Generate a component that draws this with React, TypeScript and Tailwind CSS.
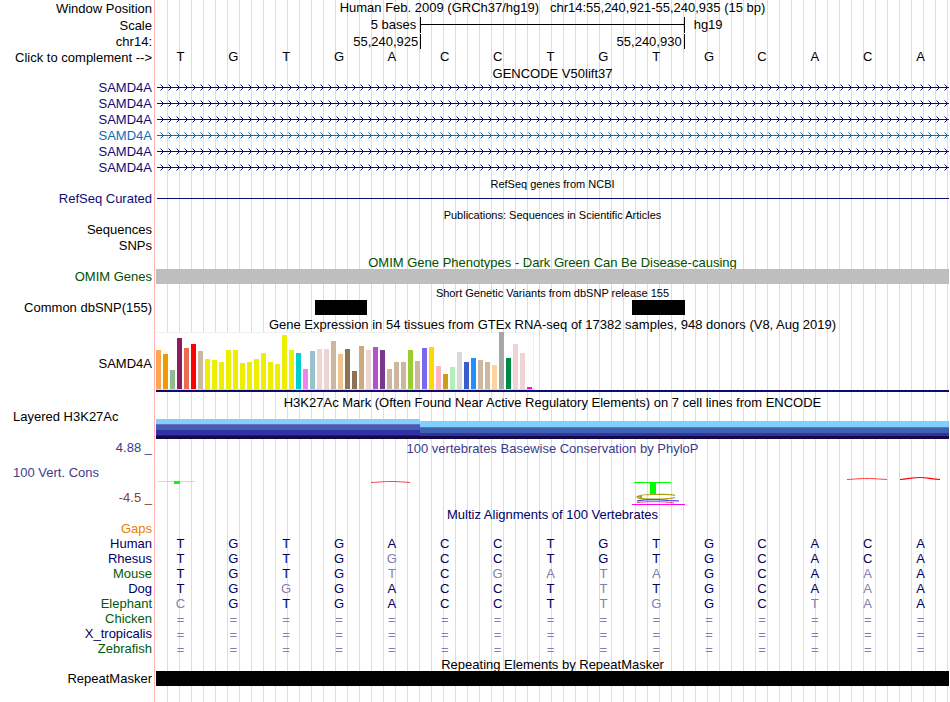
import type { ReactNode } from 'react'
import clsx from 'clsx'

const REFERENCE = 'TGTGACCTGTGCACA'

const TRANSCRIPTS = [
  { id: 'tx1', color: 'text-[#0c0c78]' },
  { id: 'tx2', color: 'text-[#0c0c78]' },
  { id: 'tx3', color: 'text-[#0c0c78]' },
  { id: 'tx4', color: 'text-[#0a6eb4]' },
  { id: 'tx5', color: 'text-[#0c0c78]' },
  { id: 'tx6', color: 'text-[#0c0c78]' },
]

const ALIGNMENTS = [
  { species: 'Human', bases: 'TGTGACCTGTGCACA', color: 'text-[#000064]' },
  { species: 'Rhesus', bases: 'TGTGGCCTGTGCACA', color: 'text-[#000064]' },
  { species: 'Mouse', bases: 'TGTGTCGATAGCAAA', color: 'text-[#005a0a]' },
  { species: 'Dog', bases: 'TGGGACCTTTGCAAA', color: 'text-[#000064]' },
  { species: 'Elephant', bases: 'CGTGACCTTGGCTAA', color: 'text-[#005a0a]' },
  { species: 'Chicken', bases: '===============', color: 'text-[#005a0a]' },
  { species: 'X_tropicalis', bases: '===============', color: 'text-[#000064]' },
  { species: 'Zebrafish', bases: '===============', color: 'text-[#005a0a]' },
]

// [bar height, tissue colour]
const EXPRESSION: [number, string][] = [
  [39, '#ffa54f'], [35, '#ee9a00'], [19, '#8fbc8f'], [51, '#8b1c62'], [41, '#ee6a50'], [45, '#ff0000'],
  [38, '#cdb79e'], [30, '#eeee00'], [29, '#eeee00'], [27, '#eeee00'], [39, '#eeee00'], [39, '#eeee00'],
  [26, '#eeee00'], [27, '#eeee00'], [30, '#eeee00'], [36, '#eeee00'], [27, '#eeee00'], [25, '#eeee00'],
  [54, '#eeee00'], [39, '#eeee00'], [36, '#00cdcd'], [20, '#ee82ee'], [38, '#9ac0cd'], [40, '#eed5d2'],
  [40, '#eed5d2'], [48, '#cdb79e'], [35, '#eec591'], [40, '#8b7355'], [18, '#8b7355'], [43, '#cdaa7d'],
  [39, '#eed5d2'], [42, '#b452cd'], [39, '#7a378b'], [20, '#cdb79e'], [27, '#cdb79e'], [27, '#cdb79e'],
  [39, '#9acd32'], [28, '#cdb79e'], [41, '#7a67ee'], [42, '#ffd700'], [23, '#ffb6c1'], [15, '#cd9b1d'],
  [22, '#b4eeb4'], [37, '#d9d9d9'], [27, '#3a5fcd'], [31, '#1e90ff'], [29, '#cdb79e'], [27, '#cdb79e'],
  [24, '#ffd39b'], [57, '#a6a6a6'], [31, '#008b45'], [45, '#eed5d2'], [36, '#eed5d2'], [2, '#ff00ff'],
]

interface RowProps {
  label?: ReactNode
  labelClass?: string
  className?: string
  children?: ReactNode
}

function Row({ label, labelClass, className, children }: RowProps) {
  return (
    <div className={clsx('flex pr-px', className)}>
      <div className={clsx('flex w-[156px] shrink-0 justify-end pr-1', labelClass)}>{label}</div>
      <div className="min-w-0 flex-1">{children}</div>
    </div>
  )
}

function Title({ label, labelClass, className, children }: RowProps) {
  return (
    <Row label={label} labelClass={labelClass}>
      <h2 className={clsx('flex items-start justify-center whitespace-pre', className)}>{children}</h2>
    </Row>
  )
}

function Bases({ bases, align = false }: { bases: string; align?: boolean }) {
  return (
    <div className="grid grid-cols-15 text-center">
      {bases.split('').map((base, i) => (
        <span
          key={i}
          className={clsx(
            'h-[15px] pr-1',
            base === '=' && 'leading-[17px]',
            align && (base === REFERENCE[i] ? 'text-[#000064]' : 'text-[#8080b2]'),
          )}
        >
          {base}
        </span>
      ))}
    </div>
  )
}

function Intron({ id }: { id: string }) {
  return (
    <svg className="block h-4 w-full" shapeRendering="crispEdges">
      <defs>
        <pattern id={id} width="8" height="16" patternUnits="userSpaceOnUse">
          <path d="M5 5h1v1h1v3h-1v1h-1v-1h1v-3h-1z" fill="currentColor" />
          <path d="M4 4h1v1h-1zM4 10h1v1h-1z" fill="currentColor" opacity="0.5" />
        </pattern>
      </defs>
      <rect x="1" y="7" width="100%" height="1" fill="currentColor" />
      <rect width="100%" height="16" fill={`url(#${id})`} />
    </svg>
  )
}

function Expression() {
  return (
    <div className="border-b-2 border-[#0c0c78]">
      <div className="flex h-[58px] w-[378px] items-end gap-[2px] border-t border-r border-b border-t-[#f0f0f0] border-r-[#f0f0f0] border-b-[#d8d8d8] bg-white">
        {EXPRESSION.map(([height, color], i) => (
          <div key={i} className="w-[5px] shrink-0" style={{ height, backgroundColor: color }} />
        ))}
      </div>
    </div>
  )
}

function Acetylation() {
  return (
    <div className="flex items-end pt-[10px]">
      <div className="w-1/3">
        <div className="h-[5px] bg-[#80d0ff]" />
        <div className="h-px bg-[#6e6ec8]" />
        <div className="h-[5px] bg-[#4062ae]" />
        <div className="h-[5px] bg-[#332fa6]" />
        <div className="h-px bg-[#2a1c58]" />
        <div className="h-[3px] bg-[#150a48]" />
      </div>
      <div className="w-2/3">
        <div className="h-[6px] bg-[#80d0ff]" />
        <div className="h-px bg-[#6e6ec8]" />
        <div className="h-[5px] bg-[#4062ae]" />
        <div className="h-[3px] bg-[#332fa6]" />
        <div className="h-[3px] bg-[#150a48]" />
      </div>
    </div>
  )
}

function Conservation() {
  return (
    <svg className="block h-[51px] w-full" viewBox="0 0 793 51" preserveAspectRatio="none" fill="none">
      <path d="M2 25.5H39" stroke="#a8f5a8" />
      <path d="M18 25h6v3h-6z" fill="#00ff00" />
      <path d="M215 26.5C225 26 228 25.5 235 25.5S247 26 254 26.5" stroke="#ff2a2a" strokeWidth="0.9" />
      <path d="M478 26h37v1h-37zM494 27h6v11h-6z" fill="#00ff00" />
      <path d="M519 39.5C514 38 506 38.5 500 38.5C488 38.5 481 39 481 41S490 43 500 43S514 43 519 41.5" stroke="#a8a010" strokeWidth="1.2" />
      <path d="M480 40.5l6 -1.5v3.5z" fill="#a8a010" />
      <path d="M481 45C488 43.5 506 43.5 512 44.5L523 45" stroke="#2020ff" strokeWidth="1.1" />
      <path d="M481 46.5C490 45.5 506 45 518 47" stroke="#ff4040" strokeWidth="1" />
      <path d="M476 48.5H529" stroke="#ff00ff" />
      <path d="M691 23.5C700 23 704 22.5 711 22.5S722 23 731 23.5" stroke="#ff2a2a" strokeWidth="0.9" />
      <path d="M744 23.5C752 23 757 21.5 764 21.5S775 23 784 23.5" stroke="#ff0000" strokeWidth="1.2" />
    </svg>
  )
}

export default function App() {
  return (
    <main className="min-h-screen bg-white bg-[linear-gradient(90deg,#ffb4b4_1px,transparent_1px),repeating-linear-gradient(90deg,transparent_0px,transparent_11px,#dcd8f5_11px,#dcd8f5_12px)] bg-[position:154px_0,156px_0] bg-no-repeat font-['Liberation_Sans',Arial,sans-serif] text-[13px] leading-[15px] text-black">
      <Title label="Window Position" labelClass="items-center" className="mb-[2px]">
        {'Human Feb. 2009 (GRCh37/hg19)   chr14:55,240,921-55,240,935 (15 bp)'}
      </Title>

      <Row label="Scale" labelClass="items-center" className="h-[17px]">
        <div className="grid grid-cols-3">
          <span className="pr-1 text-right">5 bases</span>
          <span className="flex h-4 flex-col border-x border-black pt-[7px]">
            <span className="h-px bg-black" />
          </span>
          <span className="pl-[9px]">hg19</span>
        </div>
      </Row>
      <Row label="chr14:">
        <div className="grid grid-cols-3 text-right">
          <span className="pr-[2px]">55,240,925</span>
          <span className="border-x border-black pr-[2px]">55,240,930</span>
        </div>
      </Row>
      <Row label="Click to complement -->" labelClass="items-center" className="h-[17px]">
        <Bases bases={REFERENCE} />
      </Row>

      <Title className="h-[14px]">GENCODE V50lift37</Title>
      {TRANSCRIPTS.map((tx) => (
        <Row key={tx.id} label="SAMD4A" className={tx.color}>
          <Intron id={tx.id} />
        </Row>
      ))}

      <Title className="h-[15px] pt-px text-[11px]">RefSeq genes from NCBI</Title>
      <Row label="RefSeq Curated" className="h-4 text-[#0c0c78]">
        <div className="mt-[7px] ml-px h-px bg-[#0c0c78]" />
      </Row>

      <Title className="h-[15px] pt-px text-[11px]">Publications: Sequences in Scientific Articles</Title>
      <Row label="Sequences" className="h-4" />
      <Row label="SNPs" className="h-4" />

      <Title className="h-[15px] pt-px text-[#005000]">
        OMIM Gene Phenotypes - Dark Green Can Be Disease-causing
      </Title>
      <Row label="OMIM Genes" labelClass="text-[#005000]">
        <div className="h-[15px] bg-[#bebebe]" />
      </Row>

      <Title className="h-4 pt-[2px] text-[11px]">Short Genetic Variants from dbSNP release 155</Title>
      <Row label="Common dbSNP(155)" className="h-4">
        <div className="grid h-[15px] grid-cols-15">
          <div className="col-start-4 bg-black" />
          <div className="col-start-10 bg-black" />
        </div>
      </Row>

      <Title className="h-4 pt-px">
        Gene Expression in 54 tissues from GTEx RNA-seq of 17382 samples, 948 donors (V8, Aug 2019)
      </Title>
      <Row label="SAMD4A" labelClass="items-center pt-[2px]">
        <Expression />
      </Row>

      <Title className="h-[17px] pt-[3px]">
        H3K27Ac Mark (Often Found Near Active Regulatory Elements) on 7 cell lines from ENCODE
      </Title>
      <Row label={<span className="flex-1 pl-[13px]">Layered H3K27Ac</span>} className="h-[31px]">
        <Acetylation />
      </Row>

      <Title label="4.88 _" labelClass="text-[#3c3c8c]" className="h-4 pt-px text-[#3c3c8c]">
        100 vertebrates Basewise Conservation by PhyloP
      </Title>
      <Row
        label={
          <div className="flex flex-1 flex-col gap-[10px] pt-[9px]">
            <span className="pl-[13px] text-[#3c3c8c]">100 Vert. Cons</span>
            <span className="text-right text-[#8c3c3c]">-4.5 _</span>
          </div>
        }
      >
        <Conservation />
      </Row>

      <Title className="h-[14px] text-[#000064]">Multiz Alignments of 100 Vertebrates</Title>
      <Row label="Gaps" labelClass="text-[#e68200]" />
      {ALIGNMENTS.map((row) => (
        <Row key={row.species} label={row.species} labelClass={row.color}>
          <Bases bases={row.bases} align />
        </Row>
      ))}

      <Title className="h-[15px] pt-px">Repeating Elements by RepeatMasker</Title>
      <Row label="RepeatMasker">
        <div className="h-[15px] bg-black" />
      </Row>
    </main>
  )
}
